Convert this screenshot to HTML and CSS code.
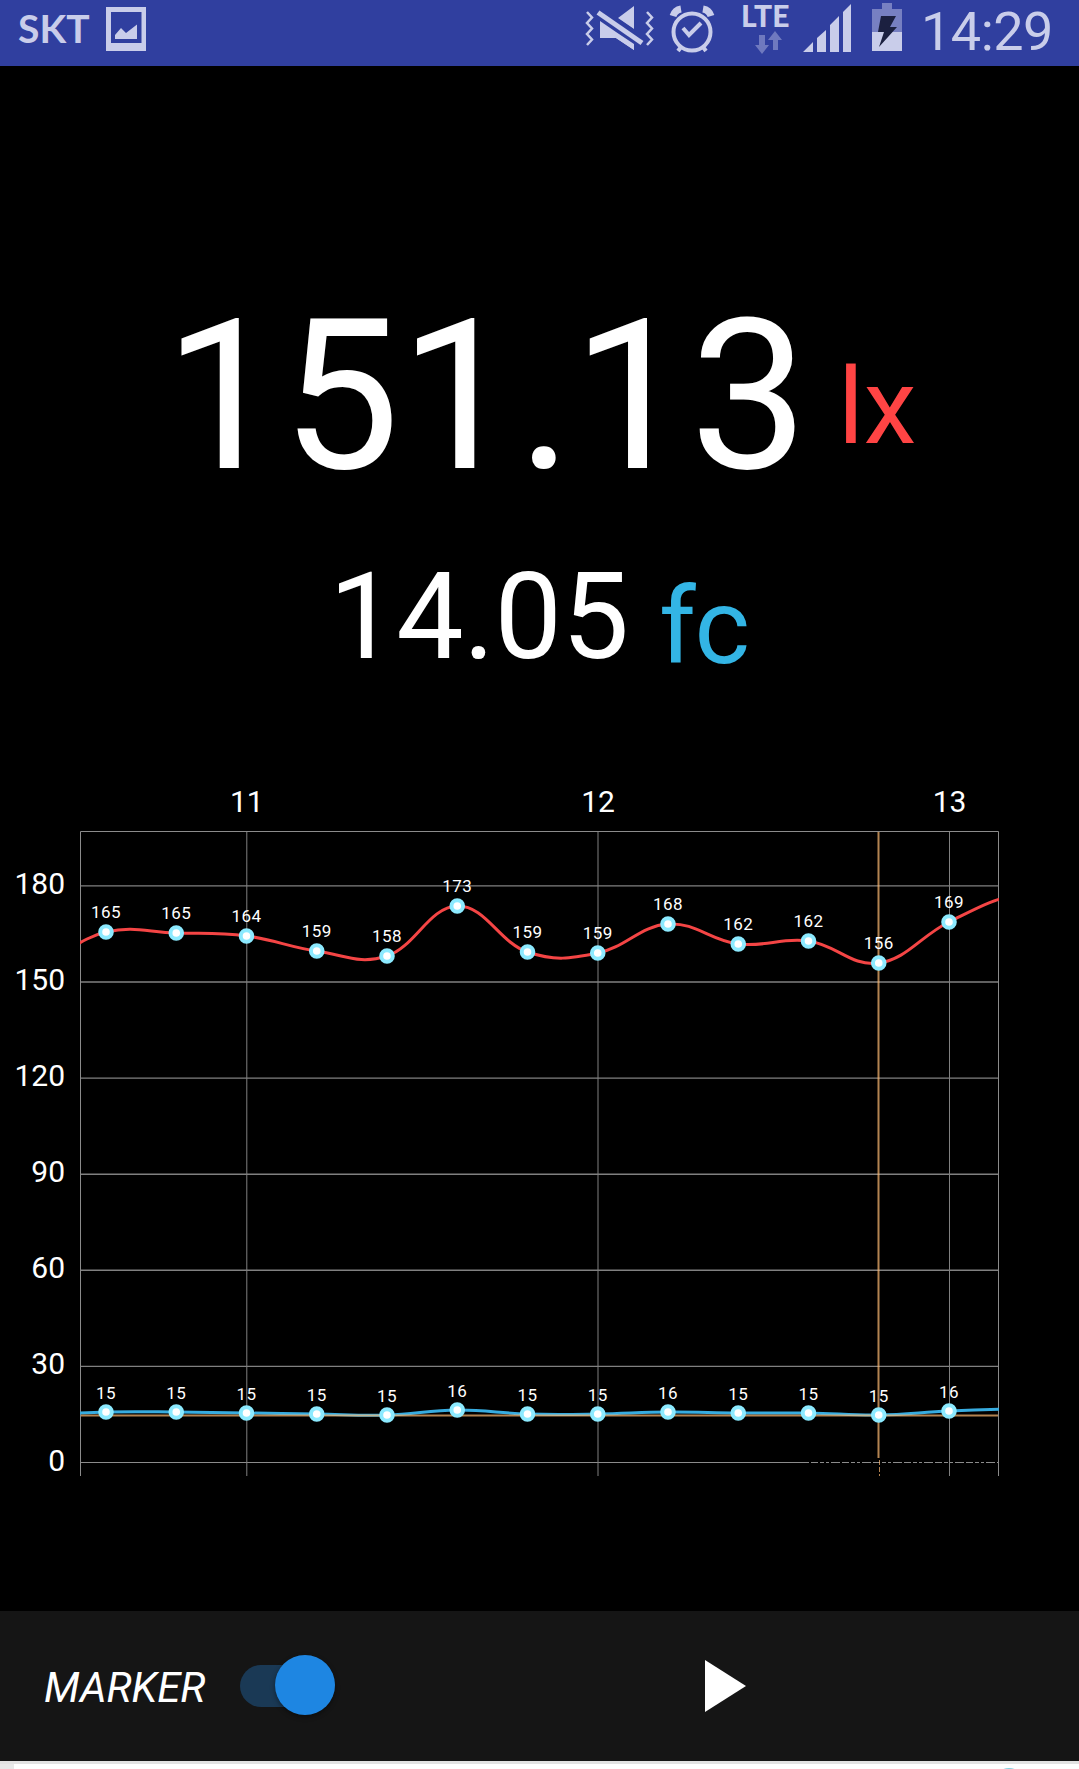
FILE: index.html
```html
<!DOCTYPE html>
<html lang="en">
<head>
    <meta charset="UTF-8">
    <meta name="viewport" content="width=device-width, initial-scale=1.0">
    <title>Light Meter</title>
    <link rel="stylesheet" href="styles.css">
</head>
<body>
    <!-- Status bar -->
    <header class="status-bar">
        <span class="carrier">SKT</span>
        <svg class="icon-image" width="40" height="44" viewBox="0 0 40 44">
            <path fill-rule="evenodd" d="M0 0H40V44H0ZM5 5V36H35.500V5Z"/>
            <path d="M9 32V28L15 21L20 26L31 17.500V32Z"/>
        </svg>
        <div class="status-icons">
            <svg class="icon-mute" width="70" height="46" viewBox="0 0 70 46">
                <path class="line" d="M2 6L7 11.500L2 17L7 22.500L2 28L7 33.500L2 39"/>
                <path class="line" d="M62 6L67 11.500L62 17L67 22.500L62 28L67 33.500L62 39"/>
                <path d="M33 12L49 0V23ZM15 16L49 38V44L31 32H15Z"/>
                <path class="slash-gap" d="M15 8L56 36"/>
                <path d="M15 15L31 26L49 38V44L31 32H15Z"/>
                <path class="slash" d="M13 6.500L57 37"/>
            </svg>
            <svg class="icon-alarm" width="46" height="48" viewBox="0 0 46 48">
                <circle cx="23" cy="27" r="18.500" class="ring"/>
                <path class="hand" d="M14 23L20 30L32 18"/>
                <path class="bell" d="M4 11Q6 5 12 4M34 4Q40 5 42 11"/>
                <path class="hand" d="M12 42L9 46M34 42L37 46"/>
            </svg>
            <div class="network">
                <span>LTE</span>
                <svg width="28" height="24" viewBox="0 0 28 24">
                    <path d="M4 4H10V14H14L7 23L0 14H4ZM18 19V9H13L20 0L27 9H23V19Z"/>
                </svg>
            </div>
            <svg class="icon-signal" width="48" height="48" viewBox="0 0 48 48">
                <path d="M0 48L10 38V48ZM14 48V34L23 26V48ZM27 48V21L36 12V48ZM40 48V8L48 0V48Z"/>
            </svg>
            <svg class="icon-battery" width="30" height="48" viewBox="0 0 30 48">
                <path class="empty" d="M10 0H20V6H30V29H0V6H10Z"/>
                <path d="M0 29H30V48H0Z"/>
                <path class="bolt" d="M9 13H24L18 24H25L7 44L12 29H6Z"/>
            </svg>
        </div>
        <span class="clock">14:29</span>
    </header>

    <!-- Readings -->
    <main>
        <div class="reading lux">
            <span class="value">151.13</span>
            <span class="unit">lx</span>
        </div>
        <div class="reading candle">
            <span class="value">14.05</span>
            <span class="unit">fc</span>
        </div>

        <svg id="chart" class="chart" width="1079" height="740" viewBox="0 770 1079 740">
            <defs>
                <clipPath id="plot"><rect x="80" y="831" width="919" height="632"/></clipPath>
            </defs>
            <path class="frame" d="M80.500 1476V831.500H998.500V1476"/>
            <path class="zero" d="M81 1462.500H809"/>
            <path class="zero dashed" d="M811 1462.500H998"/>
            <g id="grid"></g>
            <g id="lines" clip-path="url(#plot)"></g>
            <path class="cursor" d="M878.500 832V1458M81 1415.500H998"/>
            <path class="cursor tail" d="M879.500 1460V1476"/>
            <g id="points"></g>
        </svg>
    </main>

    <!-- Controls -->
    <footer class="controls">
        <span class="label">MARKER</span>
        <div class="switch"><div class="thumb"></div></div>
        <svg class="play" width="42" height="52" viewBox="0 0 42 52">
            <path d="M0 0L41 26L0 52Z"/>
        </svg>
    </footer>
    <div class="sheet">
        <div class="sheet-edge"></div>
        <div class="sheet-dot"></div>
    </div>

    <script src="chart.js"></script>
</body>
</html>
```
FILE: chart.js
```js
const NS = "http://www.w3.org/2000/svg";
const STEP = 70.25;
const FIRST_X = 106;

// value shown above the point, and its height in the plot
const lux = [
    [165, 932], [165, 933], [164, 936], [159, 951], [158, 956], [173, 906], [159, 952],
    [159, 953], [168, 924], [162, 944], [162, 941], [156, 963], [169, 922]
];
const candle = [
    [15, 1412], [15, 1412], [15, 1413], [15, 1414], [15, 1415], [16, 1410], [15, 1414],
    [15, 1414], [16, 1412], [15, 1413], [15, 1413], [15, 1415], [16, 1411]
];

function add(parent, name, attrs, text) {
    const el = document.createElementNS(NS, name);
    for (const key in attrs) {
        el.setAttribute(key, attrs[key]);
    }
    if (text !== undefined) {
        el.textContent = text;
    }
    document.getElementById(parent).appendChild(el);
}

// Cubic line through the points, before and after are the off-screen neighbours
function drawLine(series, before, after, className) {
    const ys = [before, ...series.map(p => p[1]), after];
    const x = i => FIRST_X + (i - 1) * STEP;
    const y = i => ys[Math.max(0, Math.min(ys.length - 1, i))];
    let d = "M" + x(0) + " " + y(0);
    for (let i = 1; i < ys.length; i++) {
        const c1 = y(i - 1) + (y(i) - y(i - 2)) * 0.2;
        const c2 = y(i) - (y(i + 1) - y(i - 1)) * 0.2;
        d += ` C${x(i - 1) + STEP * 0.4} ${c1} ${x(i) - STEP * 0.4} ${c2} ${x(i)} ${y(i)}`;
    }
    add("lines", "path", { d: d, class: className });
}

function drawPoints(series, gap) {
    series.forEach((p, i) => {
        const x = FIRST_X + i * STEP;
        add("points", "circle", { cx: x, cy: p[1], r: 5.8, class: "dot" });
        add("points", "text", { x: x, y: p[1] - gap, class: "point-label" }, p[0]);
    });
}

// Horizontal lines and left axis
for (let v = 0; v <= 180; v += 30) {
    const y = 1462.5 - v * 3.2033;
    if (v > 0) {
        add("grid", "path", { d: `M81 ${y}H998`, class: "grid-line" });
    }
    add("grid", "text", { x: 65, y: y + 8, class: "axis-left" }, v);
}

// Vertical lines and top axis
[[11, 246.8], [12, 598], [13, 949.5]].forEach(([label, x]) => {
    add("grid", "path", { d: `M${x} 832V1476`, class: "grid-line vertical" });
    add("grid", "text", { x: x, y: 812, class: "axis-top" }, label);
});

drawLine(lux, 965, 894, "lux-line");
drawLine(candle, 1415, 1409, "candle-line");
drawPoints(lux, 14);
drawPoints(candle, 13);
```
FILE: styles.css
```css
body {
    margin: 0;
    height: 1769px;
    overflow: hidden;
    display: flex;
    flex-direction: column;
    background-color: #000;
    color: #fff;
    font-family: Roboto, sans-serif;
}

/* Status bar */
.status-bar {
    display: flex;
    align-items: flex-start;
    box-sizing: border-box;
    height: 66px;
    padding-left: 18px;
    background-color: #303f9f;
    color: #c9cdea;
    fill: #c9cdea;
}

.carrier {
    width: 88px;
    font: bold 39px/40px Lato, sans-serif;
    margin-top: 8px;
}

.icon-image {
    margin-top: 7px;
}

.status-icons {
    display: flex;
    margin-left: 439px;
}

.icon-mute {
    margin-top: 6px;
}

.line {
    fill: none;
    stroke: #c9cdea;
    stroke-width: 2.5;
}

.slash {
    stroke: #c9cdea;
    stroke-width: 5;
}

.slash-gap {
    stroke: #303f9f;
    stroke-width: 13;
}

.icon-alarm {
    margin: 5px 0 0 14px;
}

.ring,
.hand,
.bell {
    fill: none;
    stroke: #c9cdea;
    stroke-width: 4;
}

.bell {
    stroke-width: 7;
}

.network {
    display: flex;
    flex-direction: column;
    width: 60px;
    margin-left: 26px;
    font: 900 30px/30px Lato, sans-serif;
}

.network svg {
    margin: 1px 0 0 14px;
    fill: #6f79bf;
}

.icon-signal {
    margin: 4px 0 0 2px;
}

.icon-battery {
    margin: 3px 0 0 21px;
}

.empty {
    fill: #7780c2;
}

.bolt {
    fill: #1b2040;
}

.clock {
    margin: 3px 0 0 19px;
    font-size: 54px;
    line-height: 58px;
    letter-spacing: -0.5px;
}

/* Readings */
main {
    display: flex;
    flex-direction: column;
    height: 1545px;
}

.reading {
    display: flex;
    align-items: flex-start;
}

.lux {
    height: 238px;
    padding: 207px 0 0 164px;
}

.lux .value {
    font-size: 210px;
    line-height: 246px;
    width: 674px;
}

.unit {
    font-size: 106px;
    line-height: 124px;
}

.lux .unit {
    margin-top: 72px;
    color: #ff4444;
}

.candle {
    height: 193px;
    padding-left: 329px;
}

.candle .value {
    font-size: 120px;
    line-height: 140px;
    width: 330px;
    margin-top: 36px;
    letter-spacing: -0.3px;
}

.candle .unit {
    margin-top: 54px;
    color: #33b5e5;
}

.lux .value {
    letter-spacing: -0.3px;
}

.chart {
    display: block;
    margin-top: 66px;
}

.frame,
.zero {
    fill: none;
    stroke: #8b8b8b;
    stroke-width: 1;
}

.dashed {
    stroke-dasharray: 7 2 4 2 3 2 9 2;
}

.grid-line {
    stroke: #808080;
    stroke-width: 1.4;
}

.vertical {
    stroke-width: 1;
}

.axis-left,
.axis-top {
    fill: #fff;
    font-size: 30px;
    text-anchor: end;
}

.axis-top {
    text-anchor: middle;
}

.lux-line,
.candle-line {
    fill: none;
    stroke: #f44545;
    stroke-width: 3;
}

.candle-line {
    stroke: #37ace0;
}

.cursor {
    stroke: #ffbb73;
    stroke-opacity: 0.7;
    stroke-width: 2;
}

.tail {
    stroke-width: 1;
    stroke-dasharray: 5 2;
}

.dot {
    fill: #fff;
    stroke: #8ceaff;
    stroke-width: 4;
}

.point-label {
    fill: #fff;
    font-size: 17px;
    letter-spacing: 0.5px;
    text-anchor: middle;
}

/* Controls */
.controls {
    display: flex;
    align-items: center;
    height: 150px;
    padding-left: 44px;
    background-color: #151515;
}

.label {
    width: 196px;
    margin-top: 2px;
    font-size: 42px;
    font-style: italic;
}

.switch {
    width: 95px;
    height: 42px;
    border-radius: 21px;
    background-color: #1a3955;
}

.thumb {
    width: 60px;
    height: 60px;
    margin: -10px 0 0 35px;
    border-radius: 50%;
    background-color: #1e86e2;
    box-shadow: 0 2px 5px rgba(0, 0, 0, 0.4);
}

.play {
    margin-left: 370px;
    fill: #fff;
}

/* Top of the sheet under the controls */
.sheet {
    display: flex;
    box-sizing: border-box;
    height: 8px;
    border-top: 3px solid #e2e2e2;
    background-color: #fff;
    overflow: hidden;
}

.sheet-edge {
    width: 14px;
    background-color: #e9e9e9;
}

.sheet-dot {
    width: 30px;
    height: 30px;
    margin: 4px 0 0 980px;
    border-radius: 50%;
    background-color: #7fcfe0;
}
```
